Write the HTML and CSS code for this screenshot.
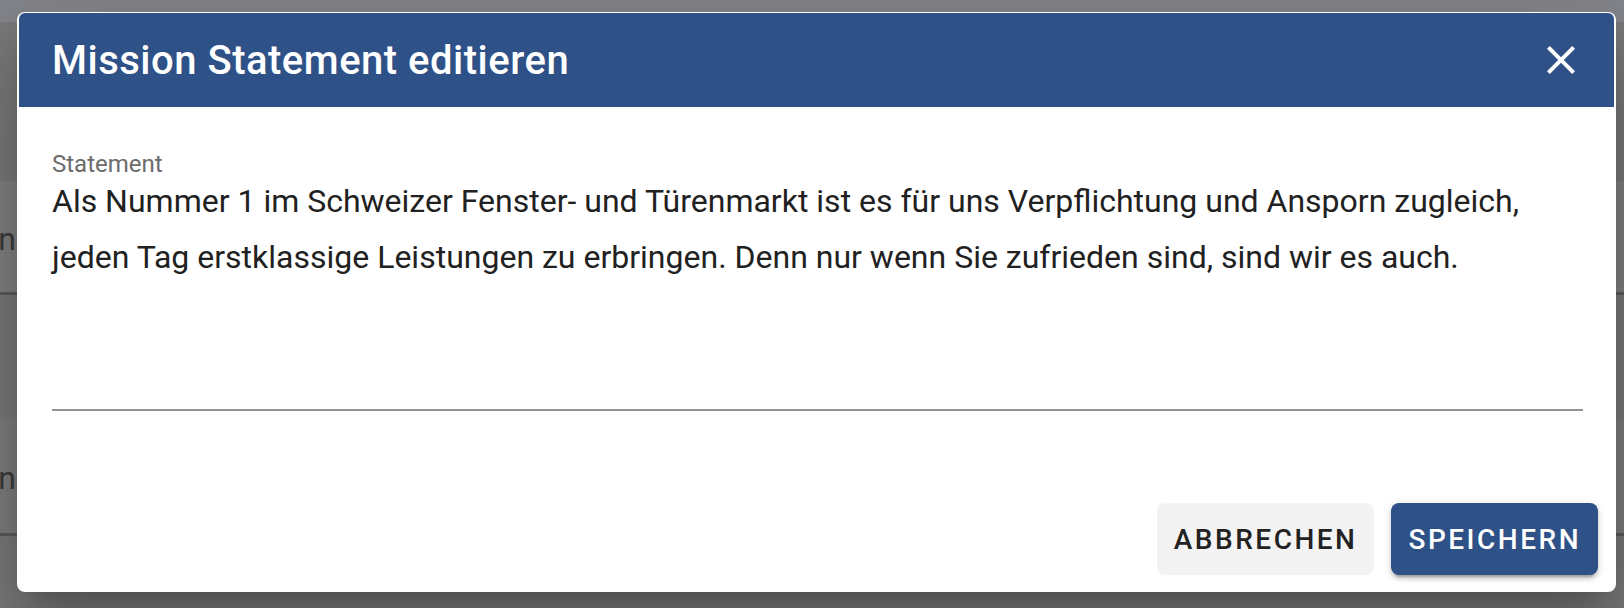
FILE: index.html
```html
<!DOCTYPE html>
<html lang="de">
<head>
    <meta charset="UTF-8">
    <meta name="viewport" content="width=device-width, initial-scale=1.0">
    <title>Mission Statement editieren</title>
    <link rel="stylesheet" href="styles.css">
</head>
<body>

    <!-- Seite hinter dem Dialog (abgedunkelt) -->
    <div class="page">
        <div class="topbar"></div>
        <div class="list">
            <div class="row row-first"><span class="cell">Mission</span></div>
            <div class="row row-second"><span class="cell">Vision</span></div>
        </div>
    </div>

    <!-- Dialog -->
    <div class="dialog">
        <div class="dialog-header">
            <h2 class="dialog-title">Mission Statement editieren</h2>
            <button class="close-btn" aria-label="Schliessen">
                <svg viewBox="0 0 24 24" width="48" height="48">
                    <path fill="#fff" d="M19 6.41L17.59 5 12 10.59 6.41 5 5 6.41 10.59 12 5 17.59 6.41 19 12 13.41 17.59 19 19 17.59 13.41 12z"/>
                </svg>
            </button>
        </div>

        <div class="dialog-body">
            <label class="field-label">Statement</label>
            <div class="field-text">Als Nummer 1 im Schweizer Fenster- und Türenmarkt ist es für uns Verpflichtung und Ansporn zugleich, jeden Tag erstklassige Leistungen zu erbringen. Denn nur wenn Sie zufrieden sind, sind wir es auch.</div>
        </div>

        <div class="dialog-actions">
            <button class="btn btn-cancel">Abbrechen</button>
            <button class="btn btn-save">Speichern</button>
        </div>
    </div>

</body>
</html>
```

FILE: styles.css
```css
body {
    margin: 0;
    font-family: Roboto, "Liberation Sans", sans-serif;
    background: #6f6f6f;
    overflow: hidden;
}

/* Hintergrundseite */
.page {
    height: 608px;
    background: #7b7b7b;
}

.topbar {
    height: 22px;
    background: #86878c;
}

.list {
    padding-top: 159px;
    display: flex;
    flex-direction: column;
    gap: 124px;
}

.row {
    height: 111px;
    background: #828282;
    border-bottom: 3px solid #5c5c5c;
    display: flex;
    align-items: center;
}

.row-second {
    height: 114px;
    background: #7f7f7f;
}

.cell {
    width: 16px;
    overflow: hidden;
    display: flex;
    justify-content: flex-end;
    font-size: 32px;
    color: #3c3c3c;
    padding-top: 4px;
}

/* Dialog */
.dialog {
    position: absolute;
    left: 17px;
    top: 12px;
    width: 1599px;
    padding: 1px 2px 0;
    box-sizing: border-box;
    background: #fff;
    border-radius: 8px;
    box-shadow: 0 22px 30px -14px rgba(0, 0, 0, 0.2),
                0 48px 76px 6px rgba(0, 0, 0, 0.14),
                0 18px 92px 16px rgba(0, 0, 0, 0.12);
}

.dialog-header {
    height: 94px;
    background: #2e5188;
    border-radius: 6px 6px 0 0;
    display: flex;
    align-items: center;
    justify-content: space-between;
    padding: 0 29px 0 33px;
}

.dialog-title {
    margin: 0;
    color: #fff;
    font-size: 40px;
    font-weight: 500;
    letter-spacing: 0.5px;
}

.close-btn {
    background: none;
    border: none;
    padding: 0;
    width: 48px;
    height: 48px;
    cursor: pointer;
}

.close-btn svg {
    display: block;
}

.dialog-body {
    padding: 47px 31px 0 33px;
}

.field-label {
    display: block;
    font-size: 24px;
    line-height: 20px;
    color: #6b6b6b;
}

.field-text {
    font-size: 32px;
    line-height: 56px;
    color: #212121;
    min-height: 236px;
    margin-top: -1px;
    border-bottom: 2px solid #949494;
}

.dialog-actions {
    display: flex;
    justify-content: flex-end;
    gap: 17px;
    padding: 92px 16px 17px;
}

.btn {
    height: 72px;
    padding: 0 17px;
    border: none;
    border-radius: 8px;
    font-family: Roboto, "Liberation Sans", sans-serif;
    font-size: 28px;
    font-weight: 500;
    letter-spacing: 2.5px;
    text-transform: uppercase;
    cursor: pointer;
}

.btn-cancel {
    background: #f3f3f3;
    color: #222;
}

.btn-save {
    background: #2e5188;
    color: #fff;
    box-shadow: 0 6px 2px -4px rgba(0, 0, 0, 0.2),
                0 4px 4px 0 rgba(0, 0, 0, 0.14),
                0 2px 10px 0 rgba(0, 0, 0, 0.12);
}
```
